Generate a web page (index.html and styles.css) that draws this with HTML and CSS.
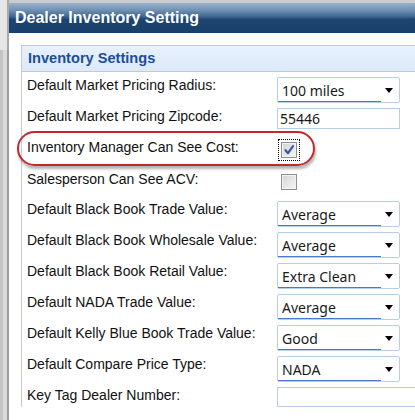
FILE: index.html
```html
<!DOCTYPE html>
<html>
<head>
<meta charset="utf-8">
<link rel="stylesheet" href="styles.css">
</head>
<body>
<div class="page">
  <div class="leftbar"><div class="lb-top"></div><div class="lb-bottom"></div></div>
  <div class="main">
    <div class="title">Dealer Inventory Setting</div>
    <div class="content">
      <div class="section">
        <div class="section-head">Inventory Settings</div>
        <div class="rows">
          <div class="row">
            <div class="label">Default Market Pricing Radius:</div>
            <div class="select"><span class="value">100 miles</span><span class="arrow"></span></div>
          </div>
          <div class="row">
            <div class="label">Default Market Pricing Zipcode:</div>
            <div class="input">55446</div>
          </div>
          <div class="row row-check">
            <div class="label">Inventory Manager Can See Cost:</div>
            <div class="check-wrap focused">
              <div class="checkbox">
                <svg width="14" height="14" viewBox="0 0 14 14"><path d="M3.5 7.2 L6 10.2 L11 3.2" fill="none" stroke="#3b55a6" stroke-width="2.2" stroke-linecap="round" stroke-linejoin="round"/></svg>
              </div>
            </div>
            <div class="highlight"></div>
          </div>
          <div class="row row-check row-check-last">
            <div class="label">Salesperson Can See ACV:</div>
            <div class="check-wrap"><div class="checkbox"></div></div>
          </div>
          <div class="row">
            <div class="label">Default Black Book Trade Value:</div>
            <div class="select"><span class="value">Average</span><span class="arrow"></span></div>
          </div>
          <div class="row">
            <div class="label">Default Black Book Wholesale Value:</div>
            <div class="select"><span class="value">Average</span><span class="arrow"></span></div>
          </div>
          <div class="row">
            <div class="label">Default Black Book Retail Value:</div>
            <div class="select"><span class="value">Extra Clean</span><span class="arrow"></span></div>
          </div>
          <div class="row">
            <div class="label">Default NADA Trade Value:</div>
            <div class="select"><span class="value">Average</span><span class="arrow"></span></div>
          </div>
          <div class="row">
            <div class="label">Default Kelly Blue Book Trade Value:</div>
            <div class="select"><span class="value">Good</span><span class="arrow"></span></div>
          </div>
          <div class="row">
            <div class="label">Default Compare Price Type:</div>
            <div class="select"><span class="value">NADA</span><span class="arrow"></span></div>
          </div>
          <div class="row">
            <div class="label">Key Tag Dealer Number:</div>
            <div class="input input-wide"></div>
          </div>
        </div>
      </div>
    </div>
  </div>
</div>
</body>
</html>
```
FILE: styles.css
```css
* { box-sizing: border-box; }
html, body { margin: 0; padding: 0; background: #fff; }
body { font-family: "Liberation Sans", Arial, sans-serif; }

.page {
  display: flex;
  width: 415px;
  height: 420px;
  overflow: hidden;
}

.leftbar {
  width: 9px;
  flex: none;
  display: flex;
  flex-direction: column;
}
.lb-top {
  height: 50px;
  background: #e6e6e6;
  border-right: 2px solid #a8a8a8;
}
.lb-bottom {
  flex: 1;
  background: #dadada;
  border-left: 3px solid #c4c4c4;
  border-right: 2px solid #9c9c9c;
}

.main {
  flex: 1;
  min-width: 0;
  background: #fff;
  overflow: hidden;
}

.title {
  height: 33px;
  border-top: 3px solid #c9ccd0;
  background: linear-gradient(#9ab2cc 0%, #6f8fb1 25%, #3d6690 45%, #1c446e 55%, #17406a 100%);
  color: #fff;
  font-weight: bold;
  font-size: 16px;
  line-height: 29px;
  padding-left: 6px;
  white-space: nowrap;
}

.content {
  padding: 12px 0 0 12px;
}

.section {
  width: 420px;
  border-left: 1px solid #cacaca;
  border-top: 1px solid #cacaca;
}

.section-head {
  height: 26px;
  line-height: 25px;
  padding-left: 6px;
  background: linear-gradient(#e8f1fc, #dce9fa);
  border-bottom: 1px solid #c8c8c8;
  color: #1c4e9c;
  font-weight: bold;
  font-size: 14.6px;
}

.rows {
  display: flex;
  flex-direction: column;
  gap: 5px;
  padding: 5px 0 0 5px;
}

.row {
  display: flex;
  align-items: flex-start;
  position: relative;
}

.label {
  width: 250px;
  flex: none;
  font-size: 14px;
  line-height: 16px;
  color: #111;
  white-space: nowrap;
}

.select {
  width: 123px;
  height: 26px;
  border: 1px solid #b7cee9;
  border-radius: 2px;
  background: #fff;
  display: flex;
}
.select .value {
  width: 103px;
  flex: none;
  padding: 3px 0 0 4px;
  line-height: 20px;
  font-family: "Noto Sans", sans-serif;
  font-size: 14px;
  color: #1a1a1a;
  border-bottom: 1px solid #4a78cc;
}
.select .arrow {
  flex: 1;
  display: flex;
  align-items: center;
  justify-content: center;
  padding-right: 2px;
}
.select .arrow::after {
  content: "";
  border-left: 4.5px solid transparent;
  border-right: 4.5px solid transparent;
  border-top: 5px solid #000;
}

.input {
  width: 123px;
  height: 21px;
  border: 1px solid #b7cee9;
  background: #fff;
  padding-left: 2px;
  font-family: "Noto Sans", sans-serif;
  font-size: 14px;
  line-height: 19px;
  color: #1a1a1a;
}
.input-wide { width: 160px; height: 20px; }

.row-check { padding-top: 5px; }
.row-check-last { padding-bottom: 3px; }

.check-wrap {
  margin-left: 1px;
  padding: 2px;
  border: 1px dotted transparent;
}
.check-wrap.focused { border-color: #000; }

.checkbox {
  width: 16px;
  height: 16px;
  border: 1px solid #8e8f90;
  background: linear-gradient(135deg, #d3d3d3, #f6f6f6);
  box-shadow: inset 0 0 0 1px #f2f2f2;
  display: flex;
  align-items: center;
  justify-content: center;
}

.highlight {
  position: absolute;
  left: -10px;
  top: -3px;
  width: 298px;
  height: 35px;
  border: 2px solid #c3262c;
  border-radius: 18px;
  box-shadow: 1px 3px 3px rgba(0, 0, 0, 0.3);
  pointer-events: none;
}
```
